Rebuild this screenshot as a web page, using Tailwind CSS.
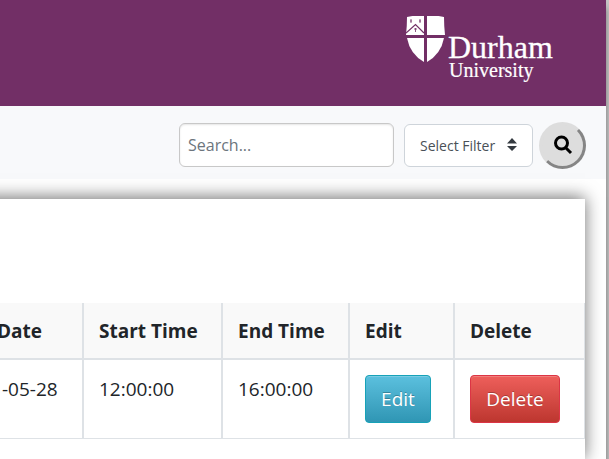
<!DOCTYPE html>
<html lang="en">
<head>
<meta charset="utf-8">
<title>Durham University</title>
<script src="https://cdn.jsdelivr.net/npm/@tailwindcss/browser@4"></script>
</head>
<body class="h-screen overflow-hidden bg-[#c4c4c4] pr-[3px] font-['Open_Sans','Noto_Sans',sans-serif] text-[#212529]">
<div class="flex h-full flex-col bg-white shadow-[0_8px_6px_rgba(0,0,0,0.4)]">
  <header class="flex h-[106px] shrink-0 justify-end bg-[#722f66] pt-4 pr-[50px]">
    <a href="#" aria-label="Durham University" class="block">
      <svg width="150" height="70" viewBox="0 0 150 70" fill="#fff">
        <path d="M1 1 Q9 -1 18 0 V19 H0 Q1 10 1 1Z"/>
        <path d="M21 0 Q30 -1 38 1 Q38 10 39 19 H21Z"/>
        <path d="M1 22 H18 V46 Q4 38 1 22Z"/>
        <path d="M21 22 H38 Q35 38 21 46Z"/>
        <path d="M0 17 L9.500 8.500 L18 17" fill="none" stroke="#722f66" stroke-width="1.2"/>
        <path d="M5 3 v4 M4 5 h2 M14 3 v4 M13 5 h2 M9.500 12 v4 M8 13 h3" fill="none" stroke="#722f66" stroke-width="1" opacity=".8"/>
        <text x="42" y="42" font-family="Liberation Serif, serif" font-size="32" stroke="#fff" stroke-width=".3">Durham</text>
        <text x="43" y="61" font-family="Liberation Serif, serif" font-size="20" stroke="#fff" stroke-width=".2">University</text>
      </svg>
    </a>
  </header>
  <form class="flex h-[73px] shrink-0 items-center justify-end gap-[10px] bg-[#f8f9fb] pt-[5px] pr-5">
    <input type="search" aria-label="Search" placeholder="Search..." class="h-11 w-[215px] rounded-md border border-[#c8c8c8] bg-white px-2 text-[16px] shadow-[inset_0_1px_2px_rgba(0,0,0,0.1)] placeholder:text-[#6c757d]">
    <div class="relative">
      <select aria-label="Select Filter" class="block h-[43px] w-[129px] appearance-none rounded-md border border-[#ced4da] bg-white pl-[15px] text-[14px] text-[#495057]"><option>Select Filter</option></select>
      <svg class="pointer-events-none absolute top-[14px] right-4" width="10" height="14" viewBox="0 0 10 14" fill="#343a40"><path d="M0 5.500 L5 0 L10 5.500Z M0 8 H10 L5 13Z"/></svg>
    </div>
    <button type="button" aria-label="Search" class="-ml-1 flex size-[47px] items-center justify-center rounded-full border-3 border-[#dddddd] border-r-[#858585] border-b-[#858585] bg-[#dddddd]">
      <svg width="20" height="20" viewBox="0 0 20 20" fill="none" stroke="#000" stroke-width="3"><circle cx="8.500" cy="8" r="6"/><path d="M13 13 L18 18"/></svg>
    </button>
  </form>
  <main class="flex-1 pt-5 pr-[21px]">
    <section class="-ml-5 h-[262px] bg-white pt-[104px] pl-5 shadow-[0_-2px_16px_rgba(0,0,0,0.55)]">
      <table class="w-full table-fixed border-collapse text-left text-[19px] leading-6">
        <colgroup><col class="w-[83px]"><col class="w-[139px]"><col class="w-[127px]"><col class="w-[105px]"><col></colgroup>
        <thead>
          <tr class="h-[56px] border-b-2 border-[#dee2e6] bg-[#f9f9f9]">
            <th class="border-r-2 border-[#dee2e6] -indent-[3px]">Date</th>
            <th class="border-r-2 border-[#dee2e6] pl-[15px]">Start Time</th>
            <th class="border-r-2 border-[#dee2e6] pl-[15px]">End Time</th>
            <th class="border-r-2 border-[#dee2e6] pl-[15px]">Edit</th>
            <th class="border-r border-[#dee2e6] pl-[15px]">Delete</th>
          </tr>
        </thead>
        <tbody>
          <tr class="border-b border-[#dee2e6] align-top">
            <td class="border-r-2 border-[#dee2e6] pt-[17px] pl-[2px]">-05-28</td>
            <td class="border-r-2 border-[#dee2e6] pt-[17px] pl-[15px]">12:00:00</td>
            <td class="border-r-2 border-[#dee2e6] pt-[17px] pl-[15px]">16:00:00</td>
            <td class="border-r-2 border-[#dee2e6] py-[15px] pl-[15px]"><button type="button" class="block h-12 w-[66px] rounded border border-[#17a2b8] bg-linear-to-b from-[#5bc0de] to-[#2f96b4] text-white shadow-[inset_0_1px_0_rgba(255,255,255,0.2)] text-shadow-[0_-1px_0_rgba(0,0,0,0.25)]">Edit</button></td>
            <td class="border-r border-[#dee2e6] py-[15px] pl-[15px]"><button type="button" class="block h-12 w-[90px] rounded border border-[#dc3545] bg-linear-to-b from-[#ee5f5b] to-[#bd362f] text-white shadow-[inset_0_1px_0_rgba(255,255,255,0.2)] text-shadow-[0_-1px_0_rgba(0,0,0,0.25)]">Delete</button></td>
          </tr>
        </tbody>
      </table>
    </section>
  </main>
</div>
</body>
</html>
